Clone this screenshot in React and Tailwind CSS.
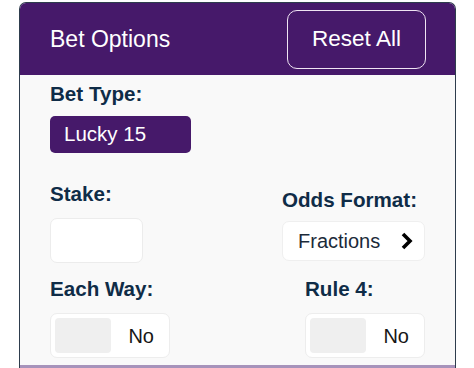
import React from "react";

const font = { fontFamily: '"Liberation Sans", Arial, Helvetica, sans-serif' };

function Label({ children }) {
  return <div className="text-[20.6px] leading-[24px] font-bold text-[#0f2c47]">{children}</div>;
}

function Toggle() {
  return (
    <div className="w-[120px] h-[45px] bg-white border border-[#ededed] rounded-[7px] flex items-center pl-[4px] pr-[15px]">
      <div className="w-[56px] h-[35px] bg-[#efefef] rounded-[4px]" />
      <span className="ml-auto text-[20px] text-[#161616]">No</span>
    </div>
  );
}

function Chevron() {
  return (
    <svg width="13" height="18" viewBox="0 0 13 18" className="block">
      <polyline points="3,2 10,9 3,16" fill="none" stroke="#000" strokeWidth="3.6" strokeLinejoin="miter" />
    </svg>
  );
}

export default function App() {
  return (
    <div className="min-h-screen bg-white pt-[2px] pl-[19px]" style={font}>
      <div className="w-[437px] border-x border-t border-[#2e3d4d] rounded-t-[7px] overflow-hidden">
        {/* header */}
        <div className="h-[72px] bg-[#46196a] flex items-center justify-between pl-[30px] pr-[29px]">
          <span className="text-[23px] text-white">Bet Options</span>
          <button className="w-[139px] h-[59px] border-[1.5px] border-[#efe4f3] rounded-[10px] text-[22.5px] text-white">
            Reset All
          </button>
        </div>

        {/* body */}
        <div className="bg-[#f9f9f9] px-[30px] pt-[7px] pb-[7px]">
          <Label>Bet Type:</Label>
          <div className="mt-[10px] w-[141px] h-[37px] rounded-[5px] bg-[#46196a] flex items-center pl-[14px] text-[20.5px] text-white">
            Lucky 15
          </div>

          <div className="mt-[29px] flex justify-between items-start">
            <div>
              <Label>Stake:</Label>
              <div className="mt-[12px] w-[93px] h-[45px] bg-white border border-[#ececec] rounded-[7px]" />
            </div>
            <div className="pt-[6px]">
              <Label>Odds Format:</Label>
              <div className="mt-[9px] w-[143px] h-[40px] bg-white border border-[#efefef] rounded-[7px] flex items-center justify-between pl-[15px] pr-[11px]">
                <span className="text-[20px] text-[#1b2a39]">Fractions</span>
                <Chevron />
              </div>
            </div>
          </div>

          <div className="mt-[14px] flex justify-between items-start">
            <div>
              <Label>Each Way:</Label>
              <div className="mt-[12px]">
                <Toggle />
              </div>
            </div>
            <div>
              <Label>Rule 4:</Label>
              <div className="mt-[12px]">
                <Toggle />
              </div>
            </div>
          </div>
        </div>
        <div className="h-[4px] bg-[#a793bb]" />
      </div>
    </div>
  );
}
